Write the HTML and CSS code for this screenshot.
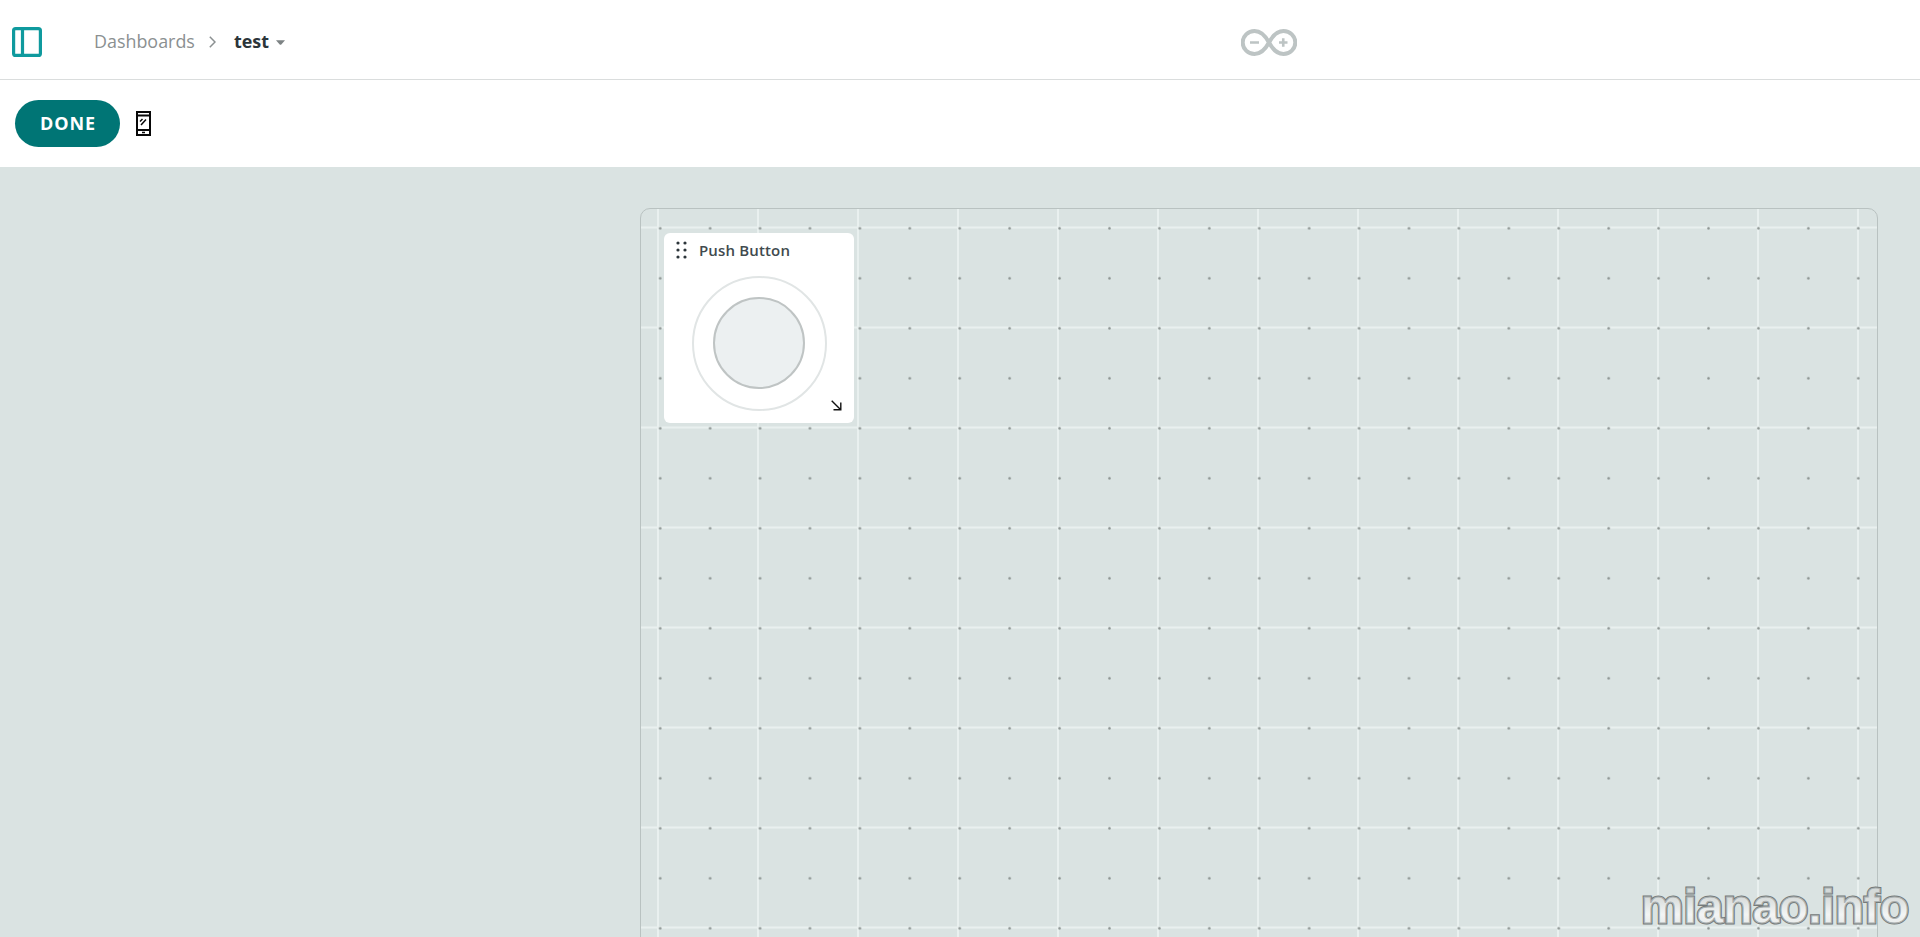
FILE: index.html
```html
<!DOCTYPE html>
<html lang="en">
<head>
<meta charset="utf-8">
<title>test - Dashboards</title>
<link rel="stylesheet" href="styles.css">
</head>
<body>
<header class="topbar">
  <svg class="sidebar-icon" width="30" height="30" viewBox="0 0 30 30"><rect x="1.600" y="1.600" width="26.800" height="26.800" rx="2"/><path d="M10.500 2v26"/></svg>
  <nav class="breadcrumb">
    <span class="crumb">Dashboards</span>
    <svg class="chevron" width="7" height="12" viewBox="0 0 7 12"><path d="M.8.800 6 6l-5.200 5.200"/></svg>
    <span class="current">test</span>
    <svg class="caret" width="9" height="5" viewBox="0 0 9 5"><path d="M0 .3h9L5.300 4.400q-.8.800-1.600 0z"/></svg>
  </nav>
  <svg class="logo" width="56" height="27" viewBox="0 0 56 27"><path class="loop" d="M28 13.500C24.500 7 20.500 2 13.500 2a11.800 11.500 0 0 0 0 23C20.500 25 24.500 20 28 13.500S35.500 2 42.500 2a11.800 11.500 0 0 1 0 23C35.500 25 31.500 20 28 13.500Z"/><path class="sign" d="M9 13.500h9M38 13.500h8.500M42.250 9.200v8.600"/></svg>
</header>
<div class="toolbar">
  <button class="done">DONE</button>
  <svg class="phone" width="15" height="25" viewBox="0 0 15 25"><path d="M1 1h13v23H1zM1 4.500h13M1 19h13"/><path class="thin" d="M4 10.500 6.500 8M5 14l5-5.500M6 21.500h3"/></svg>
</div>
<main class="workspace">
  <section class="board">
    <svg class="grid" width="1236" height="729">
      <defs>
        <pattern id="lines" x="16" y="17.500" width="100" height="100" patternUnits="userSpaceOnUse"><path d="M0 0h100v2H0zM0 0h2v100H0z"/></pattern>
        <pattern id="dots" x="17.700" y="17.800" width="49.920" height="50" patternUnits="userSpaceOnUse"><circle cx="1.500" cy="1.500" r="1.300"/></pattern>
      </defs>
      <rect width="1236" height="729" fill="url(#lines)"/>
      <rect width="1236" height="729" fill="url(#dots)"/>
    </svg>
    <article class="widget">
      <div class="widget-head">
        <svg class="handle" width="12" height="18" viewBox="0 0 12 18"><circle cx="2" cy="2" r="1.600"/><circle cx="9" cy="2" r="1.600"/><circle cx="2" cy="9" r="1.600"/><circle cx="9" cy="9" r="1.600"/><circle cx="2" cy="16" r="1.600"/><circle cx="9" cy="16" r="1.600"/></svg>
        <span class="title">Push Button</span>
      </div>
      <div class="ring"><div class="knob"></div></div>
      <svg class="resize" width="11" height="11" viewBox="0 0 11 11"><path d="M.7.700 9.500 9.500M2.500 9.800h7.300V2.500"/></svg>
    </article>
  </section>
</main>
<svg class="watermark" width="290" height="60"><defs><linearGradient id="metal" x1="0" y1="0" x2="0" y2="1"><stop offset=".3" stop-color="#d5dad9"/><stop offset=".65" stop-color="#f3f5f5"/><stop offset="1" stop-color="#dde1e0"/></linearGradient></defs><text class="outer" x="11" y="46" textLength="268">mianao.info</text><text class="inner" x="11" y="46" textLength="268">mianao.info</text></svg>
</body>
</html>
```
FILE: styles.css
```css
* { box-sizing: border-box; }
body {
  margin: 0;
  height: 937px;
  overflow: hidden;
  display: flex;
  flex-direction: column;
  background: #fff;
  font-family: "Open Sans", "Noto Sans", sans-serif;
}
svg { display: block; flex: none; }
.topbar {
  height: 80px;
  flex: none;
  display: flex;
  align-items: center;
  padding: 4px 0 0 12px;
  border-bottom: 1px solid #dadddd;
}
.sidebar-icon { fill: none; stroke: #0f9a9e; stroke-width: 3.2; }
.breadcrumb {
  display: flex;
  align-items: center;
  flex: none;
  width: 1199px;
  padding: 0 0 2px 52px;
  font-size: 17.9px;
  line-height: 24px;
}
.crumb { width: 115px; color: #8b9091; }
.chevron { fill: none; stroke: #8b9091; stroke-width: 1.5; margin-top: 3px; }
.current { width: 42px; margin-left: 18px; font-weight: 700; color: #2c353a; }
.caret { fill: #7d8384; margin-top: 4px; }
.loop { fill: none; stroke: #bdc4c4; stroke-width: 4; }
.sign { fill: none; stroke: #bdc4c4; stroke-width: 2.6; }
.logo { margin-top: 1px; }
.toolbar {
  height: 87px;
  flex: none;
  display: flex;
  align-items: flex-start;
  padding: 20px 0 0 15px;
}
.done {
  width: 105px;
  height: 47px;
  border: 0;
  border-radius: 24px;
  padding: 0 0 2px 1px;
  background: #007575;
  color: #fff;
  font: 700 18px "Open Sans", sans-serif;
  letter-spacing: .9px;
}
.phone { margin: 11px 0 0 16px; fill: none; stroke: #080808; stroke-width: 2; }
.thin { stroke-width: 1.5; }
.workspace {
  flex: 1;
  min-height: 0;
  padding: 41px 42px 0 640px;
  background: #dae3e2;
}
.board {
  position: relative;
  height: 740px;
  border: 1px solid #b9c2c1;
  border-radius: 10px;
  padding: 24px 0 0 23px;
}
.grid { position: absolute; left: 0; top: 0; }
#lines path { fill: #e9f0ef; }
#dots circle { fill: #89918f; }
.widget {
  position: relative;
  width: 190px;
  height: 190px;
  border-radius: 6px;
  background: #fff;
}
.widget-head { display: flex; align-items: center; height: 35px; padding: 0 0 1px 12px; }
.handle { fill: #2c353a; }
.title {
  margin-left: 11px;
  padding-bottom: 1px;
  font-size: 15px;
  font-weight: 600;
  letter-spacing: .15px;
  color: #414a4e;
}
.ring {
  width: 135px;
  height: 135px;
  margin: 8px auto 0;
  padding-bottom: 1px;
  display: grid;
  place-items: center;
  border: 2px solid #e1e5e5;
  border-radius: 50%;
}
.knob { width: 92px; height: 92px; border: 2px solid #bfc4c4; border-radius: 50%; background: #ecf0f1; }
.resize { position: absolute; right: 12px; bottom: 12px; fill: none; stroke: #111; stroke-width: 1.4; }
.watermark { position: absolute; right: 0; bottom: 0; font: 700 48px "Liberation Sans", sans-serif; }
.outer { fill: #777d7d; stroke: #747a7a; stroke-width: 3; }
.inner { fill: url(#metal); stroke: #abb0b0; stroke-width: 1; }
```
